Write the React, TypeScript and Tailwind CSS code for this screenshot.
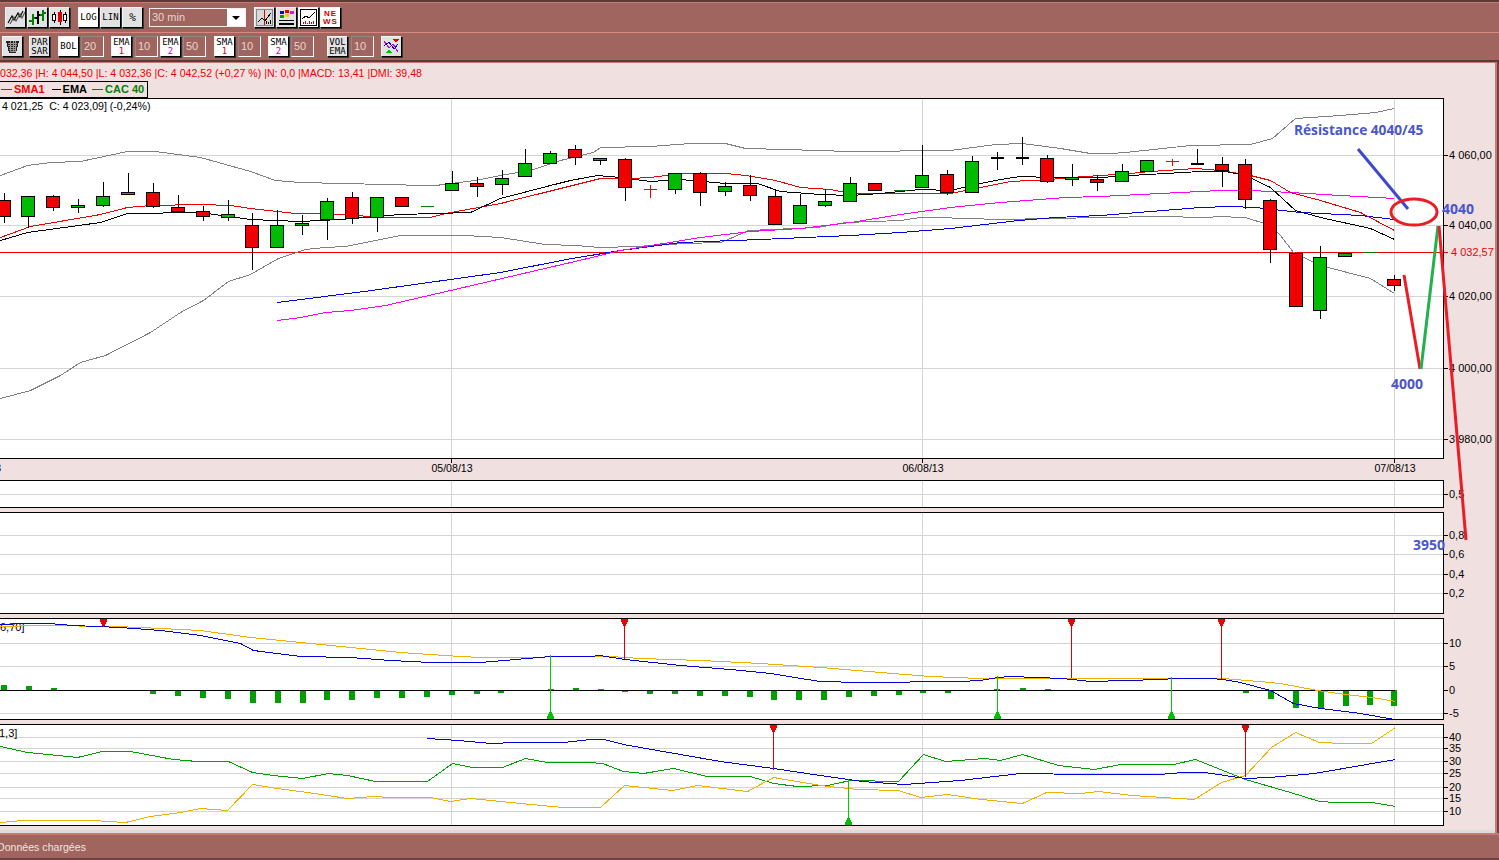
import type { ReactNode } from "react";

interface Candle {
  x: number;
  top: number;
  bottom: number;
  high: number;
  low: number;
  color: "r" | "g" | "k";
}

const c = (x: number, top: number, bottom: number, high: number, low: number, color: Candle["color"]): Candle => ({ x, top, bottom, high, low, color });

const candles: Candle[] = [
  c(4, 200, 216, 193, 223, "r"), c(28, 196, 216, 196, 228, "g"), c(53, 196, 207, 195, 211, "r"), c(78, 205, 207, 199, 213, "g"),
  c(103, 196, 205, 182, 207, "g"), c(128, 192, 194, 173, 194, "g"), c(153, 192, 206, 183, 208, "r"), c(178, 207, 211, 195, 212, "r"),
  c(203, 211, 216, 206, 221, "r"), c(228, 214, 217, 200, 221, "g"), c(252, 225, 247, 213, 270, "r"), c(277, 225, 247, 210, 247, "g"),
  c(302, 223, 225, 215, 235, "g"), c(327, 201, 219, 198, 240, "g"), c(352, 197, 218, 192, 224, "r"), c(377, 197, 217, 197, 232, "g"),
  c(402, 197, 206, 197, 206, "r"), c(452, 183, 190, 171, 190, "g"), c(477, 183, 186, 177, 197, "r"), c(502, 178, 184, 170, 195, "g"),
  c(525, 163, 176, 149, 176, "g"), c(550, 153, 163, 151, 163, "g"), c(575, 149, 157, 145, 165, "r"), c(600, 158, 160, 158, 165, "g"),
  c(625, 159, 187, 158, 201, "r"), c(675, 173, 189, 173, 194, "g"), c(700, 173, 192, 172, 206, "r"), c(725, 186, 191, 182, 196, "g"),
  c(750, 185, 195, 175, 201, "r"), c(775, 196, 224, 190, 224, "r"), c(800, 205, 223, 194, 223, "g"), c(825, 201, 205, 189, 207, "g"),
  c(850, 183, 201, 177, 201, "g"), c(875, 183, 190, 183, 190, "r"), c(922, 175, 187, 145, 187, "g"), c(947, 174, 192, 170, 195, "r"),
  c(972, 161, 192, 156, 192, "g"), c(1047, 158, 181, 155, 183, "r"), c(1072, 177, 179, 164, 186, "g"), c(1097, 179, 182, 175, 191, "r"),
  c(1122, 171, 181, 164, 182, "g"), c(1147, 160, 171, 160, 171, "g"), c(1222, 164, 170, 157, 187, "r"), c(1245, 164, 199, 159, 209, "r"),
  c(1270, 200, 249, 199, 263, "r"), c(1296, 253, 306, 253, 306, "r"), c(1320, 257, 310, 246, 319, "g"), c(1345, 253, 256, 253, 256, "g"),
  c(1394, 279, 285, 275, 291, "r"),
];

// doji: bar with no body
const dojis: [number, number, number, number, string][] = [
  [427, 206, 206, 206, "#008000"], [650, 189, 185, 198, "#f00000"], [900, 190, 190, 190, "#008000"], [997, 157, 152, 170, "#000"],
  [1022, 157, 137, 165, "#000"], [1172, 161, 159, 166, "#f00000"], [1197, 163, 149, 163, "#000"], [1370, 252, 252, 252, "#008000"],
];

const upperBand = "0,175 27,165 50,162 80,161 127,151 155,151 200,157 250,171 275,180 300,182 385,184 425,185 435,185 475,180 500,175 530,170 560,160 593,152 600,147 650,146 690,143 725,143 745,148 785,149 850,151 950,150 995,144 1022,143 1060,148 1090,153 1110,153 1125,152 1190,145 1250,144 1272,138 1295,118 1340,115 1375,112 1394,108";
const lowerBand = "0,398 30,390 60,375 80,362 105,355 150,332 180,312 203,300 228,281 250,274 278,258 305,249 325,247 345,246 400,235 465,235 500,237 545,244 575,245 600,247 635,246 685,243 720,242 730,238 748,230 817,227 845,222 900,220 920,217 935,217 1000,219 1050,218 1155,216 1210,217 1215,216 1245,217 1270,225 1280,235 1293,252 1320,265 1370,278 1394,293";
const sma = "0,237 30,226 100,214 127,207 150,205 200,204 230,205 250,208 295,213 350,214 375,217 430,217 445,213 500,203 600,178 630,178 650,177 680,173 725,173 745,175 775,180 800,187 830,189 850,193 950,193 980,187 1010,181 1050,179 1070,177 1130,173 1150,171 1195,168 1220,170 1250,175 1270,180 1290,192 1320,200 1360,212 1394,230";
const ema = "0,240 27,232 100,222 127,213 200,212 250,219 300,221 340,219 400,214 470,212 500,198 550,185 570,180 597,175 620,177 650,181 680,179 725,183 757,183 780,191 820,194 850,195 880,193 920,189 950,190 980,183 1000,179 1020,176 1050,177 1100,177 1130,175 1200,171 1225,171 1245,175 1270,187 1295,210 1320,217 1370,228 1394,239";
const magenta = "277,320 300,317 325,312 350,310 385,305 450,290 583,259 620,250 700,237 750,231 800,228 850,222 900,214 950,207 1000,202 1065,197 1100,196 1160,193 1220,190 1250,190 1290,192 1340,195 1394,198";
const blueMa = "277,302 371,290 500,272 566,259 620,250 680,242 760,239 850,235 900,232 950,228 1018,220 1055,217 1100,215 1200,207 1230,206 1255,207 1300,212 1360,215 1394,219";

const macdBlue = "0,624 25,623 48,623 73,625 120,627 160,630 200,635 240,643 253,650 300,656 350,657 390,660 430,662 480,662 550,656 590,656 600,655 605,656 625,659 680,665 730,669 770,673 800,678 820,681 860,682 960,681 980,680 997,677 1010,676 1062,678 1090,681 1160,679 1175,678 1210,678 1222,679 1240,682 1270,690 1293,703 1320,708 1360,713 1394,719";
const macdOrange = "0,626 40,625 115,626 140,627 200,630 250,637 330,645 400,652 460,656 480,657 610,656 640,658 700,660 760,663 820,667 880,672 930,676 980,678 1222,678 1259,681 1280,683 1317,690 1345,694 1372,697 1395,701";
const dmiGreen = "0,746 27,752 47,754 77,757 102,751 130,751 173,759 197,761 228,761 252,772 273,775 302,778 328,773 347,775 375,781 427,781 452,763 472,767 502,767 525,758 547,762 588,762 602,763 623,771 643,773 673,768 707,776 750,776 773,783 797,786 827,785 850,780 898,781 923,754 945,761 984,758 1000,760 1022,754 1058,765 1094,769 1120,764 1173,764 1195,759 1245,779 1290,792 1319,801 1335,802 1372,802 1395,806";
const dmiOrange = "0,822 22,820 92,820 125,822 150,816 180,812 200,808 227,810 252,784 277,788 307,792 347,798 373,796 390,797 430,797 450,801 470,798 480,799 520,803 563,807 600,807 624,785 672,790 697,785 747,791 773,777 820,785 857,789 898,790 920,797 947,794 981,799 1022,803 1046,792 1080,793 1098,791 1132,795 1194,799 1221,782 1245,775 1271,747 1295,732 1319,742 1343,743 1371,743 1395,727";
const dmiBlue = "427,738 458,740 480,742 490,743 515,742 563,742 590,739 604,739 623,744 657,750 720,761 773,768 813,774 862,781 903,784 960,780 1020,773 1085,774 1159,774 1183,772 1204,772 1245,778 1269,777 1314,773 1395,759";

const histogram: [number, number][] = [
  [4, 685], [29, 686], [54, 688], [153, 694], [178, 696], [203, 698], [228, 699], [253, 703], [278, 703], [303, 703], [327, 700], [352, 700],
  [377, 698], [402, 698], [427, 697], [452, 695], [477, 694], [501, 693], [551, 689], [576, 688], [601, 689], [625, 692], [650, 694], [675, 694],
  [700, 696], [725, 696], [750, 697], [774, 700], [799, 700], [824, 700], [849, 697], [874, 696], [899, 695], [923, 693], [948, 693], [997, 689],
  [1023, 688], [1048, 689], [1246, 693], [1271, 699], [1296, 708], [1321, 708], [1346, 706], [1370, 705], [1394, 706],
];

const verticals = [451, 922, 1394];
const labelFont = "'Liberation Sans', sans-serif";

function Grid({ ys, top, bottom }: { ys: number[]; top: number; bottom: number }) {
  return (
    <g stroke="#d4d4d4">
      {ys.map((y) => (
        <line key={y} x1={0} x2={1444} y1={y + 0.5} y2={y + 0.5} />
      ))}
      {verticals.map((x) => (
        <line key={x} x1={x + 0.5} x2={x + 0.5} y1={top} y2={bottom} />
      ))}
    </g>
  );
}

function Line({ points, color }: { points: string; color: string }) {
  return <polyline points={points} fill="none" stroke={color} strokeWidth={1} transform="translate(0.5 0.5)" />;
}

function SellSignal({ x, from, to }: { x: number; from: number; to: number }) {
  return (
    <g fill="#f00000">
      <rect x={x} y={from} width={1} height={to - from} fill="#e00000" />
      <rect x={x - 3} y={from} width={7} height={3} />
      <rect x={x - 2} y={from + 3} width={5} height={2} />
      <rect x={x - 1} y={from + 5} width={3} height={2} />
    </g>
  );
}

function BuySignal({ x, from, to }: { x: number; from: number; to: number }) {
  return (
    <g fill="#00c000">
      <rect x={x} y={from} width={1} height={to - from} fill="#00d000" />
      <rect x={x - 3} y={to - 3} width={7} height={3} />
      <rect x={x - 2} y={to - 5} width={5} height={2} />
      <rect x={x - 1} y={to - 7} width={3} height={2} />
    </g>
  );
}

// one boxed chart with its price axis beside it; both svgs use page y coordinates
function Panel({
  top,
  height,
  ticks,
  children,
}: {
  top: number;
  height: number;
  ticks: { y: number; label: string; color?: string; dx?: number }[];
  children: ReactNode;
}) {
  return (
    <div className="flex" style={{ height }}>
      <div className="relative h-full w-[1444px] border-y border-r border-black bg-white">
        <svg
          width={1443}
          height={height - 2}
          viewBox={`0 ${top + 1} 1443 ${height - 2}`}
          shapeRendering="crispEdges"
          className="block"
        >
          {children}
        </svg>
      </div>
      <svg width={51} height={height} viewBox={`1444 ${top} 51 ${height}`} className="block overflow-visible">
        {ticks.map((t) => (
          <g key={t.label}>
            <line x1={1444} x2={1448} y1={t.y + 0.5} y2={t.y + 0.5} stroke={t.color ?? "#000"} shapeRendering="crispEdges" />
            <text x={1449 + (t.dx ?? 0)} y={t.y + 4} fontSize={11} fill={t.color ?? "#000"} fontFamily={labelFont}>
              {t.label}
            </text>
          </g>
        ))}
      </svg>
    </div>
  );
}

function RaisedButton({ children, white, className }: { children: ReactNode; white?: boolean; className?: string }) {
  return (
    <div
      className={`flex h-[21px] w-[21px] shrink-0 items-center justify-center border border-t-[#f4f4f4] border-l-[#f4f4f4] border-r-black border-b-black font-['DejaVu_Sans_Mono',monospace] text-[9px] leading-[9px] text-black shadow-[1px_1px_0_#333] ${
        white ? "bg-white" : "bg-[#e2e2e2]"
      } ${className ?? ""}`}
    >
      {children}
    </div>
  );
}

function TwoLine({ a, b, color }: { a: string; b: string; color?: string }) {
  return (
    <div className="flex flex-col items-center text-[9px] leading-[9px]">
      <span>{a}</span>
      <span style={{ color }}>{b}</span>
    </div>
  );
}

function PeriodInput({ value }: { value: string }) {
  return (
    <div className="flex h-[21px] w-[23px] shrink-0 items-center border border-t-[#8a8a8a] border-l-[#8a8a8a] border-r-white border-b-white bg-[#a0655f] pl-[2px] font-['Liberation_Sans',sans-serif] text-[11px] text-[#e6d6d0]">
      {value}
    </div>
  );
}

function Toolbars() {
  return (
    <div className="h-[62px] shrink-0 border-y-2 border-[#5e3a36] bg-[#a0655f]">
      <div className="flex h-[30px] items-center border-t border-[#c67a70] pl-[5px]">
        <div className="flex gap-[1px]">
          <RaisedButton>
            <svg width="18" height="15" viewBox="0 0 18 15" fill="none" stroke="#000" strokeWidth="1.1">
              <polyline points="1,13 5,6 7,10 11,3 13,7 16,1" />
              <polyline points="3,14 7,7 9,11 13,4 15,8 18,2" stroke="#555" />
            </svg>
          </RaisedButton>
          <RaisedButton>
            <svg width="17" height="17" viewBox="0 0 17 17" shapeRendering="crispEdges" fill="none" strokeWidth="2">
              <path d="M4 5v11M0 12h4M4 9h3" stroke="#008000" />
              <path d="M9 2v13M6 9h3M9 6h3" stroke="#000" />
              <path d="M14 1v11M11 6h3M14 4h3" stroke="#008000" />
            </svg>
          </RaisedButton>
          <RaisedButton>
            <svg width="17" height="17" viewBox="0 0 17 17" shapeRendering="crispEdges">
              <path d="M3 3v11M9 1v15M14 3v11" stroke="#000" fill="none" />
              <rect x="1.5" y="5.5" width="3" height="6" fill="#fff" stroke="#000" />
              <rect x="7" y="3" width="4" height="10" fill="#e00000" />
              <rect x="12.5" y="5.5" width="3" height="6" fill="#fff" stroke="#000" />
            </svg>
          </RaisedButton>
        </div>
        <div className="ml-[8px] flex gap-[1px]">
          <RaisedButton white>LOG</RaisedButton>
          <RaisedButton>LIN</RaisedButton>
          <RaisedButton><span className="text-[11px]">%</span></RaisedButton>
        </div>
        <div className="ml-[6px] flex h-[19px] w-[97px] border border-[#f2eeee] font-['Liberation_Sans',sans-serif] text-[11px]">
          <div className="flex flex-1 items-center pl-[2px] text-[#e6d6d0]">30 min</div>
          <div className="flex w-[18px] items-center justify-center bg-white">
            <div className="h-0 w-0 border-x-[4px] border-t-[4px] border-x-transparent border-t-black" />
          </div>
        </div>
        <div className="ml-[8px] flex gap-[1px]">
          <RaisedButton>
            <svg width="17" height="17" viewBox="0 0 17 17" shapeRendering="crispEdges" fill="none">
              <rect x="0.5" y="0.5" width="16" height="16" fill="#d8d8d8" stroke="#888" />
              <path d="M8 1v15" stroke="#e00000" />
              <polyline points="2,13 6,9 9,12 15,4" stroke="#000" />
              <path d="M10 15v-3M12 15v-2M14 15v-4" stroke="#000" />
            </svg>
          </RaisedButton>
          <RaisedButton>
            <svg width="17" height="17" viewBox="0 0 17 17" shapeRendering="crispEdges">
              <rect x="2" y="2" width="4" height="3" fill="#0000e0" />
              <rect x="7" y="1" width="4" height="3" fill="#e00000" />
              <rect x="12" y="2" width="4" height="3" fill="#ff00ff" />
              <rect x="2" y="6" width="4" height="3" fill="#00a000" />
              <rect x="7" y="5" width="4" height="3" fill="#f0d000" />
              <rect x="1" y="11" width="15" height="1" fill="#000" />
              <rect x="1" y="14" width="15" height="2" fill="#000" />
            </svg>
          </RaisedButton>
          <RaisedButton white>
            <svg width="17" height="17" viewBox="0 0 17 17" shapeRendering="crispEdges" fill="none">
              <rect x="0.5" y="0.5" width="16" height="16" stroke="#000" />
              <polyline points="2,10 6,7 9,9 15,3" stroke="#000" />
              <path d="M3 15v-2M5 15v-3M7 15v-1M9 15v-3M11 15v-2M13 15v-3" stroke="#e00000" />
            </svg>
          </RaisedButton>
          <RaisedButton white>
            <div className="flex flex-col items-center font-['Liberation_Sans',sans-serif] text-[8px] leading-[8px] font-bold tracking-[1px] text-[#d00000]">
              <span>NE</span>
              <span>WS</span>
            </div>
          </RaisedButton>
        </div>
      </div>
      <div className="flex h-[28px] items-center border-t border-[#d88a80] pl-[2px]">
        <RaisedButton>
          <svg width="15" height="15" viewBox="0 0 15 15" shapeRendering="crispEdges">
            <polygon points="1,2 14,2 11,14 4,14" fill="#222" />
            <path d="M3 4h9M3 6h9M4 8h7M4 10h7M5 12h5M5 2v11M8 2v11M10 2v11" stroke="#999" fill="none" />
          </svg>
        </RaisedButton>
        <RaisedButton className="ml-[6px]"><TwoLine a="PAR" b="SAR" /></RaisedButton>
        <RaisedButton white className="ml-[8px]">BOL</RaisedButton>
        <div className="ml-[2px]"><PeriodInput value="20" /></div>
        <RaisedButton white className="ml-[7px]"><TwoLine a="EMA" b="1" color="#e00000" /></RaisedButton>
        <div className="ml-[3px]"><PeriodInput value="10" /></div>
        <RaisedButton white className="ml-[2px]"><TwoLine a="EMA" b="2" color="#d000d0" /></RaisedButton>
        <div className="ml-[2px]"><PeriodInput value="50" /></div>
        <RaisedButton white className="ml-[8px]"><TwoLine a="SMA" b="1" color="#e00000" /></RaisedButton>
        <div className="ml-[3px]"><PeriodInput value="10" /></div>
        <RaisedButton white className="ml-[7px]"><TwoLine a="SMA" b="2" color="#d000d0" /></RaisedButton>
        <div className="ml-[2px]"><PeriodInput value="50" /></div>
        <RaisedButton className="ml-[13px]"><TwoLine a="VOL" b="EMA" /></RaisedButton>
        <div className="ml-[3px]"><PeriodInput value="10" /></div>
        <RaisedButton className="ml-[7px]">
          <svg width="17" height="17" viewBox="0 0 17 17" shapeRendering="crispEdges" fill="none">
            <polyline points="1,3 6,10 10,6 15,14" stroke="#d000d0" />
            <polyline points="1,8 6,4 11,11 15,6" stroke="#0000c0" />
            <polygon points="10,1 16,1 13,5" fill="#e00000" />
            <polygon points="3,15 9,15 6,11" fill="#00c000" />
          </svg>
        </RaisedButton>
      </div>
    </div>
  );
}

function MainChart() {
  return (
    <>
      <Grid ys={[155, 225, 296, 368, 439]} top={99} bottom={459} />
      <line x1={0} x2={1444} y1={252.5} y2={252.5} stroke="#f00000" />
      <Line points={upperBand} color="#808080" />
      <Line points={lowerBand} color="#808080" />
      <Line points={blueMa} color="#0000e6" />
      <Line points={magenta} color="#ff00ff" />
      <Line points={sma} color="#f00000" />
      <Line points={ema} color="#000" />
      {candles.map((k) => (
        <g key={k.x}>
          {k.high < k.low && <line x1={k.x + 0.5} x2={k.x + 0.5} y1={k.high} y2={k.low} stroke="#000" />}
          <rect
            x={k.x - 6.5}
            y={k.top + 0.5}
            width={13}
            height={k.bottom - k.top}
            fill={k.color === "r" ? "#f00000" : "#00bc00"}
            stroke="#000"
          />
        </g>
      ))}
      {dojis.map(([x, y, hi, lo, color]) => (
        <g key={x}>
          {hi < lo && <line x1={x + 0.5} x2={x + 0.5} y1={hi} y2={lo} stroke={color} />}
          <line x1={x - 6} x2={x + 7} y1={y + 0.5} y2={y + 0.5} stroke={color} strokeWidth={color === "#000" ? 2 : 1} />
        </g>
      ))}
      <text x={2} y={110} fontSize={10.6} fill="#000" fontFamily={labelFont} shapeRendering="auto">
        4 021,25{"\u00a0\u00a0"}C: 4 023,09] (-0,24%)
      </text>
    </>
  );
}

function DateAxis() {
  return (
    <svg width={1444} height={21} viewBox="0 459 1444 21" className="block">
      {verticals.map((x) => (
        <line key={x} x1={x + 0.5} x2={x + 0.5} y1={459} y2={463} stroke="#000" shapeRendering="crispEdges" />
      ))}
      {[
        [452, "05/08/13"],
        [923, "06/08/13"],
        [1395, "07/08/13"],
      ].map(([x, label]) => (
        <text key={label} x={x} y={472} textAnchor="middle" fontSize={10.6} fontFamily={labelFont} fill="#000">
          {label}
        </text>
      ))}
      <text x={-5} y={472} fontSize={11} fontFamily={labelFont} fill="#000">
        3
      </text>
    </svg>
  );
}

function Annotations() {
  const font = "'Open Sans', sans-serif";
  return (
    <svg width={1499} height={860} className="pointer-events-none absolute left-0 top-0">
      <line x1={1358} y1={149} x2={1408} y2={209} stroke="#3f48cc" strokeWidth={3} />
      <ellipse cx={1414} cy={212} rx={23} ry={13} fill="none" stroke="#ed1c24" strokeWidth={3} />
      <polyline points="1404,275 1420,369" fill="none" stroke="#ed1c24" strokeWidth={3} />
      <polyline points="1421,369 1438,226" fill="none" stroke="#22b14c" strokeWidth={3} />
      <polyline points="1439,226 1466,540" fill="none" stroke="#ed1c24" strokeWidth={3} />
      <g fill="#4a56cc" fontFamily={font} fontWeight={700} fontSize={14}>
        <text x={1294} y={135} fontSize={13.7}>Résistance 4040/45</text>
        <text x={1442} y={214}>4040</text>
        <text x={1391} y={389}>4000</text>
        <text x={1413} y={550}>3950</text>
      </g>
    </svg>
  );
}

function LegendItem({ label, dash, gap, color }: { label: string; dash: number; gap: number; color: string }) {
  return (
    <span className="flex items-center" style={{ color, marginLeft: gap }}>
      <span className="mr-[2px] h-[1px]" style={{ width: dash, backgroundColor: color }} />
      {label}
    </span>
  );
}

export default function App() {
  return (
    <div className="relative flex h-[860px] w-[1499px] flex-col overflow-hidden bg-[#a0655f] font-['Liberation_Sans',sans-serif]">
      <Toolbars />
      <div className="mr-[4px] flex h-[771px] shrink-0 flex-col border-t border-[#c67a70] bg-[#f0e0e0] shadow-[2px_0_0_#c67a70,4px_0_0_#6e4440]">
        <div className="h-[18px] whitespace-nowrap pt-[4px] text-[10.6px] leading-[13px] text-[#f00000]">
          032,36 |H: 4 044,50 |L: 4 032,36 |C: 4 042,52 (+0,27 %) |N: 0,0 |MACD: 13,41 |DMI: 39,48
        </div>
        <div className="flex h-[17px] w-[148px] items-center border-y border-r border-black text-[11px] font-bold leading-[13px]">
          <LegendItem label="SMA1" dash={11} gap={1} color="#f00000" />
          <LegendItem label="EMA" dash={9} gap={7} color="#000000" />
          <LegendItem label="CAC 40" dash={11} gap={5} color="#008000" />
        </div>
        <Panel
          top={98}
          height={361}
          ticks={[
            { y: 155, label: "4 060,00" },
            { y: 225, label: "4 040,00" },
            { y: 252, label: "4 032,57", color: "#f00000", dx: 2 },
            { y: 296, label: "4 020,00" },
            { y: 368, label: "4 000,00" },
            { y: 439, label: "3 980,00" },
          ]}
        >
          <MainChart />
        </Panel>
        <DateAxis />
        <Panel top={480} height={28} ticks={[{ y: 494, label: "0,5" }]}>
          <Grid ys={[494]} top={481} bottom={507} />
        </Panel>
        <div className="h-[4px]" />
        <Panel
          top={512}
          height={102}
          ticks={[
            { y: 535, label: "0,8" },
            { y: 554, label: "0,6" },
            { y: 574, label: "0,4" },
            { y: 593, label: "0,2" },
          ]}
        >
          <Grid ys={[535, 554, 574, 593]} top={513} bottom={613} />
        </Panel>
        <div className="h-[4px]" />
        <Panel
          top={618}
          height={102}
          ticks={[
            { y: 643, label: "10" },
            { y: 666, label: "5" },
            { y: 690, label: "0" },
            { y: 713, label: "-5" },
          ]}
        >
          <Grid ys={[643, 666, 713]} top={619} bottom={719} />
          <text x={0} y={631} fontSize={11} fill="#000" fontFamily={labelFont}>
            6,70]
          </text>
          {histogram.map(([x, y]) => (
            <rect key={x} x={x - 3} y={Math.min(y, 690)} width={6} height={Math.abs(y - 690)} fill="#00a000" />
          ))}
          <line x1={0} x2={1395} y1={690.5} y2={690.5} stroke="#000" />
          <Line points={macdOrange} color="#f0b000" />
          <Line points={macdBlue} color="#0000d8" />
          <SellSignal x={103} from={619} to={627} />
          <SellSignal x={624} from={619} to={659} />
          <SellSignal x={1071} from={619} to={678} />
          <SellSignal x={1221} from={619} to={679} />
          <BuySignal x={550} from={655} to={719} />
          <BuySignal x={997} from={676} to={719} />
          <BuySignal x={1171} from={677} to={719} />
        </Panel>
        <div className="h-[4px]" />
        <Panel
          top={724}
          height={102}
          ticks={[
            { y: 737, label: "40" },
            { y: 748, label: "35" },
            { y: 761, label: "30" },
            { y: 773, label: "25" },
            { y: 787, label: "20" },
            { y: 798, label: "15" },
            { y: 811, label: "10" },
          ]}
        >
          <Grid ys={[737, 748, 761, 773, 787, 798, 811]} top={725} bottom={825} />
          <text x={-1} y={737} fontSize={11} fill="#000" fontFamily={labelFont}>
            1,3]
          </text>
          <Line points={dmiGreen} color="#00a000" />
          <Line points={dmiOrange} color="#f0b000" />
          <Line points={dmiBlue} color="#0000d8" />
          <SellSignal x={773} from={725} to={770} />
          <SellSignal x={1245} from={725} to={777} />
          <BuySignal x={848} from={779} to={825} />
        </Panel>
        <div className="mt-[2px] flex-1 bg-[#f0e0e0]" />
        <div className="h-[3px] bg-[#dcdcdc]" />
      </div>
      <div className="flex flex-1 flex-col border-t-2 border-[#c67a70] bg-[#a0655f]">
        <div className="-ml-[3px] flex flex-1 items-center whitespace-nowrap pt-[3px] text-[10.6px] text-[#f0e4e0]">Données chargées</div>
        <div className="h-[2px] bg-[#6e4440]" />
      </div>
      <Annotations />
    </div>
  );
}
